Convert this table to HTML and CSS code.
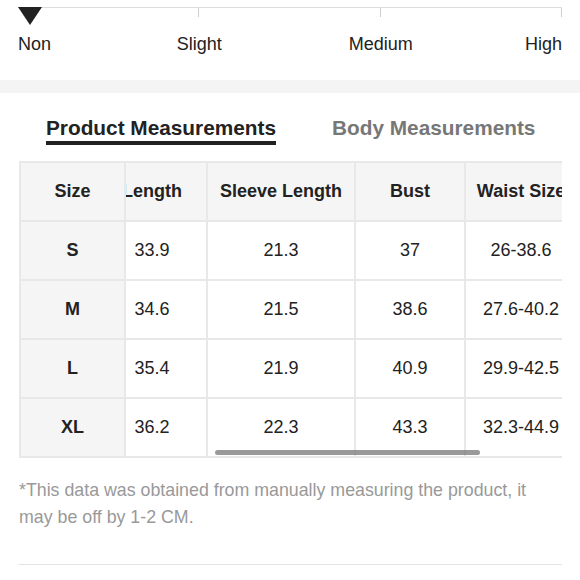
FILE: index.html
```html
<!DOCTYPE html>
<html>
<head>
<meta charset="utf-8">
<link rel="stylesheet" href="styles.css">
</head>
<body>
<section class="fit">
  <div class="track">
    <span class="marker"></span>
    <div class="seg"></div><div class="seg"></div><div class="seg"></div>
  </div>
  <div class="labels">
    <span class="l-non">Non</span>
    <span class="l-slight">Slight</span>
    <span class="l-medium">Medium</span>
    <span class="l-high">High</span>
  </div>
</section>
<div class="band"></div>
<section class="measure">
  <div class="tabs">
    <span class="tab active">Product Measurements</span>
    <span class="tab">Body Measurements</span>
  </div>
  <div class="table-wrap">
    <div class="col-fixed">
      <div class="cell head">Size</div>
      <div class="cell bold">S</div>
      <div class="cell bold">M</div>
      <div class="cell bold">L</div>
      <div class="cell bold">XL</div>
    </div>
    <div class="clip">
      <div class="grid">
        <div class="cell head">Length</div>
        <div class="cell head">Sleeve Length</div>
        <div class="cell head">Bust</div>
        <div class="cell head">Waist Size</div>
        <div class="cell head">Hip Size</div>

        <div class="cell">33.9</div><div class="cell">21.3</div><div class="cell">37</div><div class="cell">26-38.6</div><div class="cell">36</div>
        <div class="cell">34.6</div><div class="cell">21.5</div><div class="cell">38.6</div><div class="cell">27.6-40.2</div><div class="cell">37.6</div>
        <div class="cell">35.4</div><div class="cell">21.9</div><div class="cell">40.9</div><div class="cell">29.9-42.5</div><div class="cell">39.9</div>
        <div class="cell">36.2</div><div class="cell">22.3</div><div class="cell">43.3</div><div class="cell">32.3-44.9</div><div class="cell">42.3</div>
      </div>
    </div>
    <div class="thumb"></div>
  </div>
  <p class="note">*This data was obtained from manually measuring the product, it may be off by 1-2 CM.</p>
  <div class="rule"></div>
</section>
</body>
</html>
```
FILE: styles.css
```css
html, body {
  margin: 0;
  padding: 0;
  background: #fff;
  font-family: "Liberation Sans", Arial, sans-serif;
  color: #222;
}

.fit {
  padding: 7px 18px 0 18px;
  height: 80px;
  box-sizing: border-box;
}

.track {
  position: relative;
  display: flex;
  width: 544px;
  border-top: 1px solid #dcdcdc;
}

.seg {
  flex: 1;
  height: 9px;
  border-right: 1px solid #cfcfcf;
}

.marker {
  position: absolute;
  left: 0;
  top: -1px;
  width: 0;
  height: 0;
  border-left: 12px solid transparent;
  border-right: 12px solid transparent;
  border-top: 18px solid #222;
}

.labels {
  display: grid;
  grid-template-columns: repeat(6, 1fr);
  width: 544px;
  margin-top: 17px;
  font-size: 18px;
  line-height: 21px;
  color: #222;
}

.l-non { grid-column: 1; text-align: left; }
.l-slight { grid-column: 2 / span 2; text-align: center; }
.l-medium { grid-column: 4 / span 2; text-align: center; }
.l-high { grid-column: 6; text-align: right; }

.band {
  height: 13px;
  background: #f4f4f4;
}

.measure {
  padding: 0 18px 0 19px;
}

.tabs {
  display: flex;
  gap: 56px;
  padding-left: 27px;
  padding-top: 23px;
  height: 30px;
  margin-bottom: 15px;
}

.tab {
  font-size: 20.8px;
  font-weight: bold;
  color: #777;
  line-height: 24px;
  height: 24px;
  white-space: nowrap;
}

.tab.active {
  color: #222;
  border-bottom: 4px solid #222;
  padding-bottom: 1px;
}

.table-wrap {
  position: relative;
  display: flex;
  width: 543px;
}

.col-fixed {
  width: 107px;
  flex: none;
  border-left: 2px solid #e8e8e8;
  border-top: 2px solid #e8e8e8;
  box-sizing: border-box;
  background: #f5f5f5;
}

.col-fixed .cell {
  width: 100%;
  background: #f5f5f5;
}

.clip {
  flex: 1;
  overflow: hidden;
  border-top: 2px solid #e8e8e8;
}

.grid {
  display: grid;
  grid-template-columns: 110px 148px 110px 112px 110px;
  margin-left: -28px;
  width: max-content;
}

.cell {
  box-sizing: border-box;
  height: 59px;
  display: flex;
  align-items: center;
  justify-content: center;
  border-right: 2px solid #e8e8e8;
  border-bottom: 2px solid #e8e8e8;
  font-size: 18px;
  color: #222;
  white-space: nowrap;
  background: #fff;
}

.cell.head {
  background: #f5f5f5;
  font-weight: bold;
}

.cell.bold {
  font-weight: bold;
}

.thumb {
  position: absolute;
  left: 196px;
  bottom: 3px;
  width: 265px;
  height: 5px;
  border-radius: 3px;
  background: rgba(120, 120, 120, 0.75);
}

.note {
  margin: 19px 0 0 0;
  font-size: 17.8px;
  line-height: 27px;
  color: #999;
  width: 535px;
}

.rule {
  margin-top: 33px;
  width: 543px;
  border-top: 1px solid #e3e3e3;
}
```
